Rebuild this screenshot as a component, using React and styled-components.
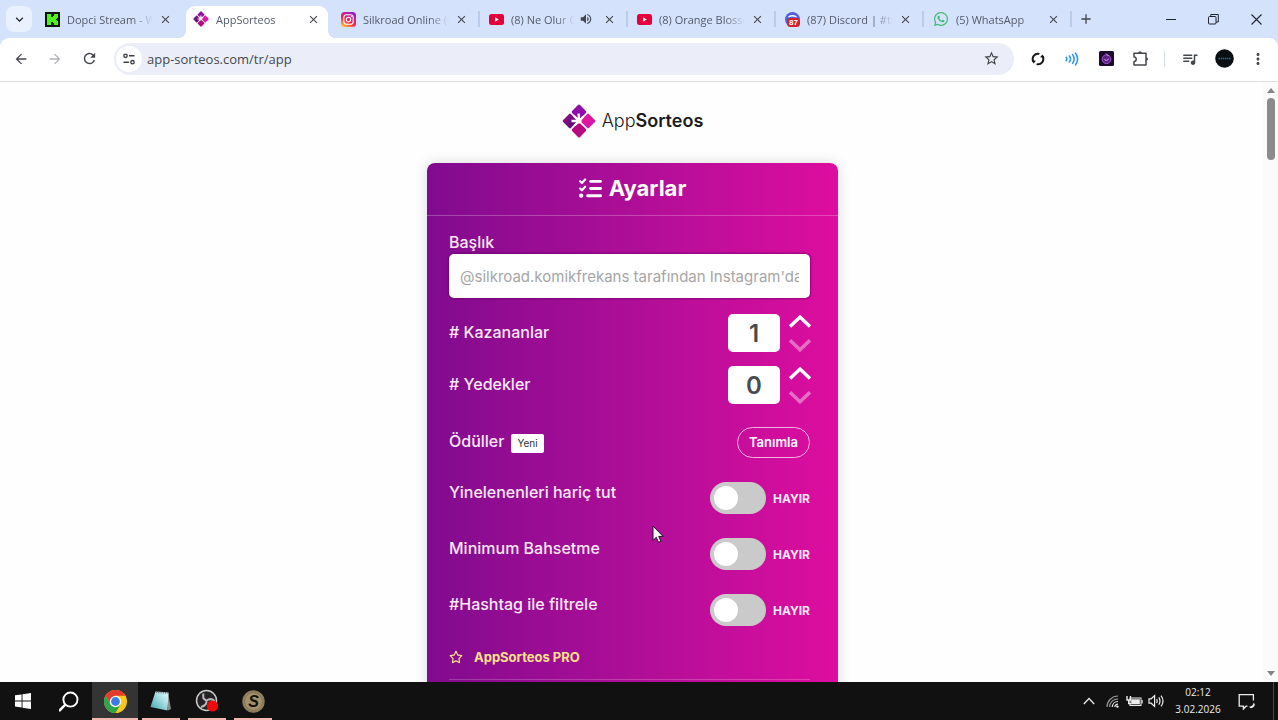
import React, { useState } from "react";
import styled, { createGlobalStyle, css } from "styled-components";
import {
  MdArrowBack,
  MdArrowForward,
  MdRefresh,
  MdStarBorder,
  MdQueueMusic,
  MdMoreVert,
  MdClose,
  MdAdd,
  MdKeyboardArrowDown,
  MdVolumeUp,
} from "react-icons/md";
import { FaListCheck, FaRegStar, FaWhatsapp } from "react-icons/fa6";

const GlobalStyle = createGlobalStyle`
  * {
    box-sizing: border-box;
  }

  body {
    margin: 0;
    background: white;
    font-family: "Inter", sans-serif;
  }

  button,
  input {
    font-family: inherit;
    margin: 0;
  }
`;

const Screen = styled.div`
  height: 100vh;
  display: flex;
  flex-direction: column;
  overflow: hidden;
`;

const IconButton = styled.button`
  width: ${(props) => props.$width || 34}px;
  height: ${(props) => props.$height || 32}px;
  flex: none;
  padding: 0;
  border: 0;
  background: none;
  display: flex;
  align-items: center;
  justify-content: center;
  color: ${(props) => props.$color || "#44474c"};
`;

/* ---------- tab strip ---------- */

const TabStrip = styled.div`
  height: 38px;
  flex: none;
  display: flex;
  align-items: center;
  background: #d5e2fc;
  font-family: "Open Sans", sans-serif;
`;

const TabSearch = styled(IconButton)`
  width: 26px;
  height: 26px;
  margin: 0 3px 0 6px;
  border-radius: 8px;
  background: #e9f1fe;
  color: #1f2228;
`;

const flare = css`
  content: "";
  position: absolute;
  bottom: 0;
  width: 8px;
  height: 8px;
`;

const Tab = styled.div`
  position: relative;
  flex: 0 1 148px;
  min-width: 0;
  height: 38px;
  padding: 0 8px 0 10px;
  display: flex;
  align-items: center;

  ${(props) =>
    props.$line &&
    css`
      &::after {
        content: "";
        position: absolute;
        right: -1px;
        top: 11px;
        width: 2px;
        height: 16px;
        background: #bccbe6;
      }
    `}

  ${(props) =>
    props.$active &&
    css`
      &::before {
        ${flare}
        left: -5px;
        background: radial-gradient(circle at 0 0, transparent 8px, white 8px);
      }

      &::after {
        ${flare}
        right: -5px;
        background: radial-gradient(
          circle at 100% 0,
          transparent 8px,
          white 8px
        );
      }
    `}
`;

const ActiveShape = styled.span`
  position: absolute;
  inset: 6px 3px 0 3px;
  border-radius: 9px 9px 0 0;
  background: white;
`;

const TabTitle = styled.button`
  position: relative;
  flex: 1;
  min-width: 0;
  height: 26px;
  padding: 0;
  border: 0;
  background: none;
  display: flex;
  align-items: center;
  gap: 7px;
  font-size: 11px;
  color: #535a6b;
  text-align: left;
`;

const TabText = styled.span`
  flex: 1;
  overflow: hidden;
  white-space: nowrap;
  mask-image: linear-gradient(to left, transparent, black 20px);
`;

const TabSound = styled(IconButton)`
  width: 22px;
  height: 20px;
`;

const TabClose = styled(IconButton)`
  position: relative;
  width: 20px;
  height: 20px;
  margin-left: 2px;
`;

const WindowControls = styled.div`
  margin-left: auto;
  display: flex;
`;

/* ---------- toolbar ---------- */

const ToolbarHolder = styled.div`
  flex: none;
  background: #d5e2fc;
`;

const Toolbar = styled.div`
  height: 44px;
  padding: 0 3px 2px 4px;
  display: flex;
  align-items: center;
  border-radius: 9px 9px 0 0;
  border-bottom: 1px solid #dcdcdc;
  background: white;
`;

const Omnibox = styled.div`
  flex: 1;
  height: 32px;
  margin: 0 7px 0 8px;
  padding: 0 6px 0 2px;
  display: flex;
  align-items: center;
  border-radius: 16px;
  background: #ebeef9;
`;

const SiteInfo = styled(IconButton)`
  width: 26px;
  height: 26px;
  border-radius: 13px;
  background: white;
`;

const Address = styled.input`
  flex: 1;
  min-width: 0;
  height: 28px;
  padding: 0 5px;
  border: 0;
  outline: 0;
  background: none;
  font-family: "Open Sans", sans-serif;
  font-size: 13px;
  color: #45484f;
`;

const ToolbarLine = styled.span`
  width: 1px;
  height: 16px;
  margin: 0 8px 0 7px;
  background: #d3dcea;
`;

/* ---------- page ---------- */

const Viewport = styled.div`
  flex: 1;
  min-height: 0;
  display: flex;
`;

const Page = styled.main`
  flex: 1;
  height: 100%;
  overflow: hidden;
  display: flex;
  flex-direction: column;
  align-items: center;
  padding: 22px 0 0 2px;
  background: #fefefe;
`;

const Logo = styled.a`
  flex: none;
  height: 33px;
  margin-bottom: 26px;
  display: flex;
  align-items: center;
  gap: 6px;
  color: #1c1c1c;
  font-size: 18px;
  font-weight: 300;
  text-decoration: none;

  b {
    font-weight: 600;
  }
`;

const Card = styled.section`
  flex: none;
  width: 411px;
  max-width: 100%;
  min-height: 900px;
  border-radius: 8px;
  background: linear-gradient(90deg, #800b8e, #b60e99 58%, #de0d9f);
  box-shadow: 0 0 14px rgba(0, 0, 0, 0.14);
  color: #fbe9f8;
`;

const CardHeader = styled.h1`
  height: 53px;
  margin: 0;
  padding-bottom: 2px;
  display: flex;
  align-items: center;
  justify-content: center;
  gap: 7px;
  border-bottom: 1px solid rgba(255, 255, 255, 0.25);
  font-size: 22px;
  font-weight: 700;
  color: white;
`;

const Form = styled.form`
  padding: 16px 28px 0 22px;
`;

const Label = styled.label`
  font-size: 16px;
  line-height: 20px;
  font-weight: 500;
`;

const Field = styled.div`
  display: flex;
  flex-direction: column;
  gap: 2px;
  margin-bottom: 16px;
`;

const TitleInput = styled.input`
  width: 100%;
  height: 44px;
  padding: 0 11px;
  border: 0;
  border-radius: 5px;
  background: white;
  box-shadow: 0 0 2px 1px rgba(90, 0, 90, 0.55);
  font-size: 15px;

  &::placeholder {
    color: #a6a6a6;
  }
`;

const Row = styled.div`
  display: flex;
  justify-content: space-between;
  align-items: ${(props) => (props.$top ? "flex-start" : "center")};
  min-height: 32px;
  margin-bottom: ${(props) => props.$space}px;
`;

const StepperRow = styled(Row)`
  ${Label} {
    padding-bottom: 2px;
  }
`;

const StepperBox = styled.div`
  display: flex;
  align-items: center;
  gap: 8px;
`;

const NumberInput = styled.input`
  width: 52px;
  height: 38px;
  padding: 0;
  border: 0;
  border-radius: 5px;
  background: white;
  text-align: center;
  font-size: 24px;
  font-weight: 600;
  color: #474c50;
`;

const Arrows = styled.div`
  display: flex;
  flex-direction: column;
  justify-content: space-between;
  height: 38px;
  margin-right: -2px;
`;

const ArrowButton = styled.button`
  width: 24px;
  height: 14px;
  padding: 0;
  border: 0;
  background: none;
  display: flex;
  color: white;

  &:disabled {
    opacity: 0.4;
  }
`;

const Badge = styled.span`
  height: 19px;
  margin-left: 7px;
  padding: 0 6px;
  display: inline-flex;
  align-items: center;
  border-radius: 2px;
  background: white;
  font-size: 10px;
  font-weight: 400;
  color: #333;
`;

const DefineButton = styled.button`
  height: 31px;
  padding: 0 11px;
  border: 1px solid #f3b3e3;
  border-radius: 16px;
  background: none;
  font-size: 13px;
  font-weight: 600;
  color: white;
`;

const ToggleBox = styled.div`
  display: flex;
  align-items: center;
  gap: 7px;
  font-size: 12px;
  font-weight: 700;
`;

const Toggle = styled.input`
  appearance: none;
  width: 56px;
  height: 32px;
  padding: 4px;
  border-radius: 16px;
  background: #cacaca;

  &::before {
    content: "";
    display: block;
    width: 24px;
    height: 24px;
    border-radius: 50%;
    background: white;
  }

  &:checked {
    background: #6fcf6f;
  }

  &:checked::before {
    margin-left: 24px;
  }
`;

const ProLine = styled.div`
  height: 34px;
  display: flex;
  align-items: flex-start;
  gap: 11px;
  border-bottom: 1px solid rgba(255, 255, 255, 0.2);
  font-size: 13px;
  line-height: 22px;
  font-weight: 700;
  color: #ffe08a;

  svg {
    margin-top: 4px;
  }
`;

const Scrollbar = styled.div`
  flex: none;
  width: 15px;
  padding: 6px 0;
  display: flex;
  flex-direction: column;
  align-items: center;
  justify-content: space-between;
  background: #fbfbfb;
`;

const ScrollTop = styled.div`
  display: flex;
  flex-direction: column;
  align-items: center;
  gap: 5px;
`;

const Thumb = styled.span`
  width: 8px;
  height: 62px;
  border-radius: 4px;
  background: #8b8b8b;
`;

/* ---------- taskbar ---------- */

const Taskbar = styled.footer`
  flex: none;
  height: 38px;
  display: flex;
  background: #111;
  color: #ececec;
  font-family: "Open Sans", sans-serif;
`;

const TaskButton = styled.button`
  width: 46px;
  height: 38px;
  padding: 0;
  border: 0;
  display: flex;
  align-items: center;
  justify-content: center;
  background: ${(props) => (props.$active ? "#343434" : "none")};
  position: relative;

  ${(props) =>
    props.$open &&
    css`
      &::after {
        content: "";
        position: absolute;
        bottom: 0;
        left: ${props.$active ? 0 : 4}px;
        right: ${props.$active ? 0 : 4}px;
        height: 2px;
        background: #f3b6ae;
      }
    `}
`;

const Tray = styled.div`
  margin-left: auto;
  display: flex;
  align-items: center;
`;

const Clock = styled.time`
  width: 62px;
  text-align: center;
  font-size: 10px;
  line-height: 17px;
`;

const TrayEnd = styled.span`
  width: 1px;
  height: 38px;
  margin: 0 4px 0 10px;
  background: #4a4a4a;
`;

const Pointer = styled.svg`
  position: absolute;
  left: 652px;
  top: 525px;
  pointer-events: none;
`;

/* ---------- drawings ---------- */

const AppMark = ({ size }) => (
  <svg width={size} height={size} viewBox="0 0 34 34">
    <defs>
      <linearGradient id="markLeft" x1="0" x2="1">
        <stop offset="0" stopColor="#8a1088" />
        <stop offset="1" stopColor="#5c0a72" />
      </linearGradient>
      <linearGradient id="markRight" x1="0" x2="1">
        <stop offset="0" stopColor="#e8149c" />
        <stop offset="1" stopColor="#cf1aa8" />
      </linearGradient>
    </defs>
    <g transform="rotate(45 17 17)">
      <rect x="5" y="5" width="11.2" height="11.2" rx="1.5" fill="#930bab" />
      <rect x="17.8" y="5" width="11.2" height="11.2" rx="1.5" fill="url(#markRight)" />
      <rect x="17.8" y="17.8" width="11.2" height="11.2" rx="1.5" fill="#b80a80" />
      <rect x="5" y="17.8" width="11.2" height="11.2" rx="1.5" fill="url(#markLeft)" />
    </g>
    <path
      d="M17 17 16.6 9.5M17 17 9.5 17M17 17 21.5 12.5M17 17 12 12M17 17 12.5 21.5"
      stroke="white"
      strokeWidth="2.3"
    />
    <circle cx="17" cy="17" r="2.6" fill="white" />
  </svg>
);

const KickIcon = () => (
  <svg width="15" height="15" viewBox="0 0 15 15">
    <rect width="15" height="15" fill="#0b160b" />
    <path
      d="M2 2h4v3h2V4h1V2h4v4h-1v1h-1v1h1v1h1v4H9v-2H8v-1H6v3H2z"
      fill="#4df51c"
    />
  </svg>
);

const InstagramIcon = () => (
  <svg width="15" height="15" viewBox="0 0 15 15">
    <defs>
      <linearGradient id="insta" x1="0.2" y1="1" x2="0.8" y2="0">
        <stop offset="0" stopColor="#ffc23c" />
        <stop offset="0.4" stopColor="#f5264e" />
        <stop offset="1" stopColor="#8a1fd6" />
      </linearGradient>
    </defs>
    <rect width="15" height="15" rx="3.5" fill="url(#insta)" />
    <rect x="2.8" y="2.8" width="9.4" height="9.4" rx="2.8" fill="none" stroke="white" strokeWidth="1.1" />
    <circle cx="7.5" cy="7.5" r="2.2" fill="none" stroke="white" strokeWidth="1.1" />
    <circle cx="10.4" cy="4.6" r="0.7" fill="white" />
  </svg>
);

const YoutubeIcon = () => (
  <svg width="15" height="15" viewBox="0 0 15 15">
    <rect y="2" width="15" height="11" rx="2.5" fill="#e5003c" />
    <path d="M6 5.2 9.8 7.5 6 9.8z" fill="white" />
  </svg>
);

const DiscordIcon = () => (
  <svg width="15" height="15" viewBox="0 0 15 15">
    <circle cx="7.5" cy="7.5" r="7.5" fill="#5560d8" />
    <path d="M3.5 5q4-2.4 8 0" stroke="white" strokeWidth="1.4" fill="none" />
    <rect x="2" y="6" width="13" height="9" rx="3.5" fill="#d8202c" />
    <text x="8.5" y="13.4" fontSize="8" fontWeight="700" fill="white" textAnchor="middle" fontFamily="Liberation Sans, sans-serif">
      87
    </text>
  </svg>
);

const TuneIcon = () => (
  <svg width="14" height="14" viewBox="0 0 14 14" fill="none" stroke="#3c4046" strokeWidth="1.4">
    <circle cx="3.5" cy="3.8" r="1.7" />
    <path d="M7 3.8h5.5M1.5 10.2H7" />
    <circle cx="10.5" cy="10.2" r="1.7" />
  </svg>
);

const SyncIcon = () => (
  <svg width="14" height="14" viewBox="0 0 14 14" fill="none" stroke="#17191c" strokeWidth="2">
    <path d="M8.4 1.9A5.2 5.2 0 0 0 2.4 9.4M5.6 12.1A5.2 5.2 0 0 0 11.6 4.6" />
    <path d="M.4 8.2 2.6 11.4 5 8.8zM13.6 5.8 11.4 2.6 9 5.2z" fill="#17191c" stroke="none" />
  </svg>
);

const WavesIcon = () => (
  <svg width="14" height="14" viewBox="0 0 14 14" fill="none" stroke="#2e9bea" strokeWidth="1.6" strokeLinecap="round">
    <path d="M1.2 5.4q1.4 1.6 0 3.2M4.4 4q2.2 3 0 6M7.6 2.6q3 4.4 0 8.8M10.6 1.2q4 5.8 0 11.6" />
  </svg>
);

const OrbIcon = () => (
  <svg width="15" height="15" viewBox="0 0 15 15">
    <rect width="15" height="15" rx="1.5" fill="#1b0b2c" />
    <circle cx="7.5" cy="8.2" r="4.4" fill="#5b2586" stroke="#a155d8" />
    <path d="M7 2.5 9.5 5M5.4 8.5q2 2.6 4.4-.6" stroke="#e0a9f5" fill="none" />
  </svg>
);

const PuzzleIcon = () => (
  <svg width="17" height="17" viewBox="0 0 17 17" fill="none" stroke="#44474c" strokeWidth="1.5">
    <path d="M2 3.2h12V15H2v-3.6a2.2 2.2 0 0 0 0-4.4z" strokeLinejoin="round" />
    <path d="M6.2 3a1.8 1.8 0 0 1 3.6 0zM14.2 7.2a1.8 1.8 0 0 1 0 3.6z" fill="#44474c" stroke="none" />
  </svg>
);

const AvatarIcon = () => (
  <svg width="19" height="19" viewBox="0 0 19 19">
    <circle cx="9.5" cy="9.5" r="9.3" fill="#0c0f12" />
    <path d="M3.5 9.5h12" stroke="#236a96" strokeWidth="1.4" strokeDasharray="1.5 .6" />
  </svg>
);

const Chevron = ({ down }) => (
  <svg width="24" height="14" viewBox="0 0 24 14" fill="none" stroke="currentColor" strokeWidth="3.4">
    <path d={down ? "M2 2.2 12 11.8 22 2.2" : "M2 12.6 12 3 22 12.6"} />
  </svg>
);

const ChromeIcon = () => (
  <svg width="23" height="23" viewBox="0 0 24 24">
    <circle cx="12" cy="12" r="12" fill="#fbc816" />
    <path d="M12 6h10.4A12 12 0 0 0 1.6 6l5.2 9z" fill="#e33b2e" />
    <path d="M1.6 6A12 12 0 0 0 12 24l5.2-9L12 17.5 6.8 15z" fill="#2da44e" />
    <circle cx="12" cy="12" r="6" fill="white" />
    <circle cx="12" cy="12" r="4.6" fill="#3a7be8" />
  </svg>
);

const NotepadIcon = () => (
  <svg width="24" height="24" viewBox="0 0 24 24">
    <defs>
      <linearGradient id="pad" x1="0" y1="1" x2="1" y2="0">
        <stop offset="0" stopColor="#3fa3ad" />
        <stop offset="0.6" stopColor="#a9dfe4" />
        <stop offset="1" stopColor="#e4f6f7" />
      </linearGradient>
    </defs>
    <path d="M19 3.5 22 20l-3 1.5z" fill="#8a8d8e" />
    <path d="M6.5 2.5 19.5 3.5 18.5 21.5 1.5 18z" fill="url(#pad)" />
    <path d="M7 3.2 19 4" stroke="#6a7677" strokeWidth="1.6" strokeDasharray="1 .8" />
  </svg>
);

const ObsIcon = () => (
  <svg width="24" height="24" viewBox="0 0 24 24">
    <circle cx="11.5" cy="11.5" r="10" fill="#242226" stroke="#c9c9c9" strokeWidth="1.5" />
    <path
      d="M11.5 11.5Q7 10 8.5 4.5M11.5 11.5q4.5-3 8 .5M11.5 11.5q.5 5-5.5 6.5"
      fill="none"
      stroke="#b9b9b9"
      strokeWidth="2"
    />
    <circle cx="17.5" cy="17" r="5.6" fill="#f20a0a" />
  </svg>
);

const CoinIcon = () => (
  <svg width="23" height="23" viewBox="0 0 23 23">
    <circle cx="11.5" cy="11.5" r="10.6" fill="#a3906c" stroke="#8d7c5c" strokeWidth="1.2" />
    <circle cx="11.5" cy="11.5" r="9" fill="none" stroke="#75674a" strokeWidth=".8" />
    <text x="11.5" y="17.3" fontSize="16" fontWeight="700" fontStyle="italic" fill="#15120d" textAnchor="middle" fontFamily="Liberation Sans, sans-serif">
      S
    </text>
  </svg>
);

const StartIcon = () => (
  <svg width="16" height="16" viewBox="0 0 16 16" fill="white">
    <path d="M0 2.3 6.6 1.4v6.1H0zM7.5 1.3 16 0v7.5H7.5zM0 8.4h6.6v6.1L0 13.6zM7.5 8.4H16V16l-8.5-1.2z" />
  </svg>
);

const SearchIcon = () => (
  <svg width="21" height="21" viewBox="0 0 22 22" fill="none" stroke="white" strokeWidth="2">
    <circle cx="12" cy="9" r="7.4" />
    <path d="M6.6 14.4 0 21" strokeWidth="2.6" />
  </svg>
);

const TrayChevron = () => (
  <svg width="12" height="8" viewBox="0 0 12 8" fill="none" stroke="#e4e4e4" strokeWidth="1.4">
    <path d="M.8 7 6 1.6 11.2 7" />
  </svg>
);

const WifiIcon = () => (
  <svg width="13" height="13" viewBox="0 0 13 13" fill="none" strokeWidth="1.2">
    <path d="M1 12A11 11 0 0 1 12 1M3.6 12A8.4 8.4 0 0 1 12 3.8" stroke="#969696" />
    <path d="M6.2 12A6 6 0 0 1 12 6.5M8.8 12A3 3 0 0 1 12 9.2" stroke="#ececec" />
    <circle cx="11.4" cy="11.6" r="1.2" fill="#ececec" />
  </svg>
);

const BatteryIcon = () => (
  <svg width="17" height="12" viewBox="0 0 17 12">
    <rect x="4" y="3" width="11" height="7.5" fill="#ececec" stroke="#ececec" />
    <rect x="4.8" y="3.9" width="9.4" height="5.7" fill="none" stroke="#111" strokeWidth=".7" />
    <rect x="15.5" y="5" width="1.2" height="3.5" fill="#ececec" />
    <path d="M1 1v4h3.5V1M2.7 5v3.6H5" fill="none" stroke="#ececec" strokeWidth="1.4" />
  </svg>
);

const SpeakerIcon = () => (
  <svg width="17" height="14" viewBox="0 0 17 14" fill="none" stroke="#ececec" strokeWidth="1.2">
    <path d="M1 4.8h2.2L6.6 1.6v10.8L3.2 9.2H1z" />
    <path d="M8.6 5q1.2 2 0 4M10.8 3.4q2.4 3.6 0 7.2M13 1.6q4 5.4 0 10.8" />
  </svg>
);

const NoticeIcon = () => (
  <svg width="17" height="17" viewBox="0 0 17 17" fill="none" stroke="#ececec" strokeWidth="1.3">
    <path d="M9.5 13.2H8L5.4 16v-2.8H1.2V1.6h14.2v6" />
    <path d="M15.6 9.4a3.2 3.2 0 1 1-4.8 4.2 4.2 4.2 0 0 0 4.8-4.2z" fill="#ececec" stroke="none" />
  </svg>
);

const ScrollArrow = ({ down }) => (
  <svg width="8" height="5" viewBox="0 0 8 5" fill="#858585">
    <path d={down ? "M0 0h8L4 5z" : "M0 5h8L4 0z"} />
  </svg>
);

/* ---------- parts ---------- */

const tabs = [
  { title: "Dopci Stream - Watch", icon: <KickIcon /> },
  { title: "AppSorteos", icon: <AppMark size={16} />, active: true },
  { title: "Silkroad Online (@", icon: <InstagramIcon />, line: true },
  { title: "(8) Ne Olur Gel", icon: <YoutubeIcon />, line: true, sound: true },
  { title: "(8) Orange Blossom", icon: <YoutubeIcon />, line: true },
  { title: "(87) Discord | #türk", icon: <DiscordIcon />, line: true },
  {
    title: "(5) WhatsApp",
    icon: <FaWhatsapp size={16} color="#3fb871" />,
    line: true,
  },
];

const toggles = [
  { id: "yinelenen", label: "Yinelenenleri hariç tut", space: 24 },
  { id: "bahsetme", label: "Minimum Bahsetme", space: 24 },
  { id: "hashtag", label: "#Hashtag ile filtrele", space: 20 },
];

const BrowserTabs = () => (
  <TabStrip>
    <TabSearch aria-label="Sekmelerde ara">
      <MdKeyboardArrowDown size={15} />
    </TabSearch>
    {tabs.map((tab) => (
      <Tab key={tab.title} $active={tab.active} $line={tab.line}>
        {tab.active && <ActiveShape />}
        <TabTitle>
          {tab.icon}
          <TabText>{tab.title}</TabText>
        </TabTitle>
        {tab.sound && (
          <TabSound aria-label="Sesi kapat">
            <MdVolumeUp size={14} />
          </TabSound>
        )}
        <TabClose aria-label="Sekmeyi kapat">
          <MdClose size={13} />
        </TabClose>
      </Tab>
    ))}
    <IconButton $width={30} aria-label="Yeni sekme">
      <MdAdd size={16} />
    </IconButton>
    <WindowControls>
      <IconButton $width={43} aria-label="Simge durumuna küçült">
        <svg width="10" height="10" viewBox="0 0 10 10">
          <path d="M0 5.5h10" stroke="#1f2430" />
        </svg>
      </IconButton>
      <IconButton $width={43} aria-label="Önceki boyut">
        <svg width="11" height="11" viewBox="0 0 11 11" fill="none" stroke="#1f2430">
          <rect x=".5" y="2.5" width="7.5" height="7.5" rx="1" />
          <path d="M2.8 2.5v-2h7.5V8H8" />
        </svg>
      </IconButton>
      <IconButton $width={43} aria-label="Kapat">
        <svg width="11" height="11" viewBox="0 0 11 11" stroke="#1f2430" strokeWidth="1.1">
          <path d="M.5.5l10 10M10.5.5l-10 10" />
        </svg>
      </IconButton>
    </WindowControls>
  </TabStrip>
);

const BrowserToolbar = () => (
  <ToolbarHolder>
    <Toolbar>
      <IconButton aria-label="Geri">
        <MdArrowBack size={16} />
      </IconButton>
      <IconButton aria-label="İleri" $color="#b0b2b6">
        <MdArrowForward size={16} />
      </IconButton>
      <IconButton aria-label="Yenile">
        <MdRefresh size={17} />
      </IconButton>
      <Omnibox>
        <SiteInfo aria-label="Site bilgileri">
          <TuneIcon />
        </SiteInfo>
        <Address aria-label="Adres" defaultValue="app-sorteos.com/tr/app" />
        <IconButton aria-label="Yer işareti ekle">
          <MdStarBorder size={17} />
        </IconButton>
      </Omnibox>
      <IconButton aria-label="Eşitle">
        <SyncIcon />
      </IconButton>
      <IconButton aria-label="Ses">
        <WavesIcon />
      </IconButton>
      <IconButton aria-label="Eklenti">
        <OrbIcon />
      </IconButton>
      <IconButton aria-label="Uzantılar">
        <PuzzleIcon />
      </IconButton>
      <ToolbarLine />
      <IconButton aria-label="Medya">
        <MdQueueMusic size={18} />
      </IconButton>
      <IconButton aria-label="Profil">
        <AvatarIcon />
      </IconButton>
      <IconButton aria-label="Menü">
        <MdMoreVert size={18} />
      </IconButton>
    </Toolbar>
  </ToolbarHolder>
);

const Stepper = ({ id, label, start, min, space }) => {
  const [value, setValue] = useState(start);
  return (
    <StepperRow $space={space}>
      <Label htmlFor={id}>{label}</Label>
      <StepperBox>
        <NumberInput
          id={id}
          value={value}
          onChange={(e) => setValue(Number(e.target.value) || min)}
        />
        <Arrows>
          <ArrowButton
            type="button"
            aria-label="Artır"
            onClick={() => setValue(value + 1)}
          >
            <Chevron />
          </ArrowButton>
          <ArrowButton
            type="button"
            aria-label="Azalt"
            disabled={value <= min}
            onClick={() => setValue(value - 1)}
          >
            <Chevron down />
          </ArrowButton>
        </Arrows>
      </StepperBox>
    </StepperRow>
  );
};

const ToggleRow = ({ id, label, space }) => {
  const [on, setOn] = useState(false);
  return (
    <Row $top $space={space}>
      <Label htmlFor={id}>{label}</Label>
      <ToggleBox>
        <Toggle
          id={id}
          type="checkbox"
          checked={on}
          onChange={() => setOn(!on)}
        />
        <span>{on ? "EVET" : "HAYIR"}</span>
      </ToggleBox>
    </Row>
  );
};

const Settings = () => (
  <Card>
    <CardHeader>
      <FaListCheck size={23} />
      Ayarlar
    </CardHeader>
    <Form>
      <Field>
        <Label htmlFor="baslik">Başlık</Label>
        <TitleInput
          id="baslik"
          placeholder="@silkroad.komikfrekans tarafından Instagram'da"
        />
      </Field>
      <Stepper id="kazanan" label="# Kazananlar" start={1} min={1} space={14} />
      <Stepper id="yedek" label="# Yedekler" start={0} min={0} space={22} />
      <Row $space={24}>
        <Label as="span">
          Ödüller
          <Badge>Yeni</Badge>
        </Label>
        <DefineButton type="button">Tanımla</DefineButton>
      </Row>
      {toggles.map((toggle) => (
        <ToggleRow key={toggle.id} {...toggle} />
      ))}
      <ProLine>
        <FaRegStar size={14} />
        AppSorteos PRO
      </ProLine>
    </Form>
  </Card>
);

const WindowsTaskbar = () => (
  <Taskbar>
    <TaskButton aria-label="Başlat">
      <StartIcon />
    </TaskButton>
    <TaskButton aria-label="Ara">
      <SearchIcon />
    </TaskButton>
    <TaskButton aria-label="Chrome" $open $active>
      <ChromeIcon />
    </TaskButton>
    <TaskButton aria-label="Not Defteri" $open>
      <NotepadIcon />
    </TaskButton>
    <TaskButton aria-label="OBS" $open>
      <ObsIcon />
    </TaskButton>
    <TaskButton aria-label="Silkroad" $open>
      <CoinIcon />
    </TaskButton>
    <Tray>
      <IconButton $width={24} aria-label="Gizli simgeler">
        <TrayChevron />
      </IconButton>
      <IconButton $width={22} aria-label="Ağ">
        <WifiIcon />
      </IconButton>
      <IconButton $width={22} aria-label="Pil">
        <BatteryIcon />
      </IconButton>
      <IconButton $width={22} aria-label="Ses düzeyi">
        <SpeakerIcon />
      </IconButton>
      <Clock>
        02:12
        <br />
        3.02.2026
      </Clock>
      <IconButton aria-label="Bildirimler">
        <NoticeIcon />
      </IconButton>
      <TrayEnd />
    </Tray>
  </Taskbar>
);

const App = () => (
  <>
    <GlobalStyle />
    <Screen>
      <BrowserTabs />
      <BrowserToolbar />
      <Viewport>
        <Page>
          <Logo href="#">
            <AppMark size={34} />
            <span>
              App<b>Sorteos</b>
            </span>
          </Logo>
          <Settings />
        </Page>
        <Scrollbar>
          <ScrollTop>
            <ScrollArrow />
            <Thumb />
          </ScrollTop>
          <ScrollArrow down />
        </Scrollbar>
      </Viewport>
      <WindowsTaskbar />
      <Pointer width="12" height="19" viewBox="0 0 12 19">
        <path
          d="M1 1v14.4l3.3-3.1 2.2 5 2.4-1-2.2-4.9h4.4z"
          fill="white"
          stroke="#1c1420"
        />
      </Pointer>
    </Screen>
  </>
);

export default App;
